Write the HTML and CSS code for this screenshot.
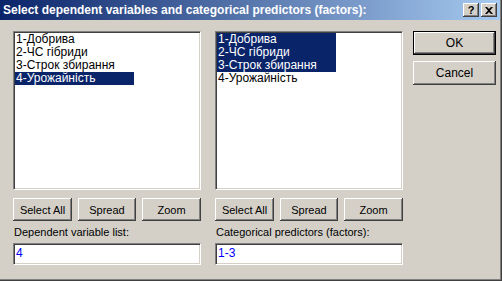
FILE: index.html
```html
<!DOCTYPE html>
<html lang="en">
<head>
    <meta charset="UTF-8">
    <title>Select dependent variables</title>
    <link rel="stylesheet" href="styles.css">
</head>
<body>
    <div class="dialog">
        <div class="title-bar">
            <span class="title-text">Select dependent variables and categorical predictors (factors):</span>
            <div class="title-buttons">
                <span class="title-btn">?</span>
                <span class="title-btn close">
                    <svg width="8" height="7" viewBox="0 0 8 7">
                        <path d="M0 0h2l2 2 2-2h2L5 3.5 8 7H6L4 5 2 7H0l3-3.5z" fill="#000"/>
                    </svg>
                </span>
            </div>
        </div>

        <div class="content">
            <div class="panel">
                <div class="listbox">
                    <div class="item">1-Добрива</div>
                    <div class="item">2-ЧС гібриди</div>
                    <div class="item">3-Строк збирання</div>
                    <div class="item selected">4-Урожайність</div>
                </div>
                <div class="btn-row">
                    <div class="btn">Select All</div>
                    <div class="btn">Spread</div>
                    <div class="btn">Zoom</div>
                </div>
                <div class="field-label">Dependent variable list:</div>
                <div class="edit">4</div>
            </div>

            <div class="panel">
                <div class="listbox">
                    <div class="item selected">1-Добрива</div>
                    <div class="item selected">2-ЧС гібриди</div>
                    <div class="item selected">3-Строк збирання</div>
                    <div class="item">4-Урожайність</div>
                </div>
                <div class="btn-row">
                    <div class="btn">Select All</div>
                    <div class="btn">Spread</div>
                    <div class="btn">Zoom</div>
                </div>
                <div class="field-label">Categorical predictors (factors):</div>
                <div class="edit">1-3</div>
            </div>

            <div class="side">
                <div class="btn default"><span>OK</span></div>
                <div class="btn wide">Cancel</div>
            </div>
        </div>
    </div>
</body>
</html>
```

FILE: styles.css
```css
body {
    margin: 0;
    padding: 0;
    background: #d4d0c8;
    font-family: "Liberation Sans", Arial, sans-serif;
    font-size: 11px;
    color: #000;
}

.dialog {
    width: 502px;
    height: 281px;
    box-sizing: border-box;
    background: #d4d0c8;
    box-shadow: inset -1px -1px 0 #404040, inset -2px -2px 0 #808080;
    overflow: hidden;
}

.title-bar {
    height: 20px;
    margin-right: 2px;
    background: linear-gradient(to right, #0a246a, #a6caf0);
    display: flex;
    align-items: center;
    justify-content: space-between;
    padding-left: 3px;
}

.title-text {
    color: #fff;
    font-weight: bold;
    font-size: 12px;
    white-space: nowrap;
}

.title-buttons {
    display: flex;
    gap: 2px;
    padding-right: 3px;
}

.title-btn {
    width: 16px;
    height: 14px;
    box-sizing: border-box;
    background: #d4d0c8;
    box-shadow: inset -1px -1px 0 #404040, inset 1px 1px 0 #fff, inset -2px -2px 0 #808080;
    display: flex;
    align-items: center;
    justify-content: center;
    font-weight: bold;
    font-size: 11px;
    line-height: 14px;
}

.content {
    display: flex;
    padding: 11px 0 0 13px;
}

.panel {
    width: 188px;
    display: flex;
    flex-direction: column;
    margin-right: 14px;
}

.listbox {
    height: 159px;
    box-sizing: border-box;
    background: #fff;
    border-top: 1px solid #808080;
    border-left: 1px solid #808080;
    border-right: 1px solid #fff;
    border-bottom: 1px solid #fff;
    box-shadow: inset 1px 1px 0 #404040, inset -1px -1px 0 #d4d0c8;
    padding: 1px 1px;
}

.item {
    width: 118px;
    height: 13px;
    line-height: 13px;
    padding-left: 1px;
    white-space: nowrap;
    font-size: 12px;
}

.item.selected {
    background: #0a246a;
    color: #fff;
}

.btn-row {
    display: grid;
    grid-template-columns: 59px 58px 59px;
    justify-content: space-between;
    margin-top: 8px;
}

.btn {
    height: 23px;
    box-sizing: border-box;
    background: #d4d0c8;
    box-shadow: inset -1px -1px 0 #404040, inset 1px 1px 0 #fff, inset -2px -2px 0 #808080;
    display: flex;
    align-items: center;
    justify-content: center;
    font-size: 11px;
}

.field-label {
    margin-top: 5px;
    height: 12px;
    line-height: 12px;
    font-size: 11px;
    padding-left: 1px;
}

.edit {
    margin-top: 5px;
    height: 22px;
    box-sizing: border-box;
    background: #fff;
    border-top: 1px solid #808080;
    border-left: 1px solid #808080;
    border-right: 1px solid #fff;
    border-bottom: 1px solid #fff;
    box-shadow: inset 1px 1px 0 #404040, inset -1px -1px 0 #d4d0c8;
    color: #0000ff;
    padding-left: 2px;
    line-height: 19px;
    font-size: 12px;
}

.side {
    display: flex;
    flex-direction: column;
    gap: 6px;
    margin-left: -4px;
}

.side .btn {
    width: 83px;
    height: 24px;
    font-size: 12px;
}

.btn.default {
    border: 1px solid #000;
}
```
